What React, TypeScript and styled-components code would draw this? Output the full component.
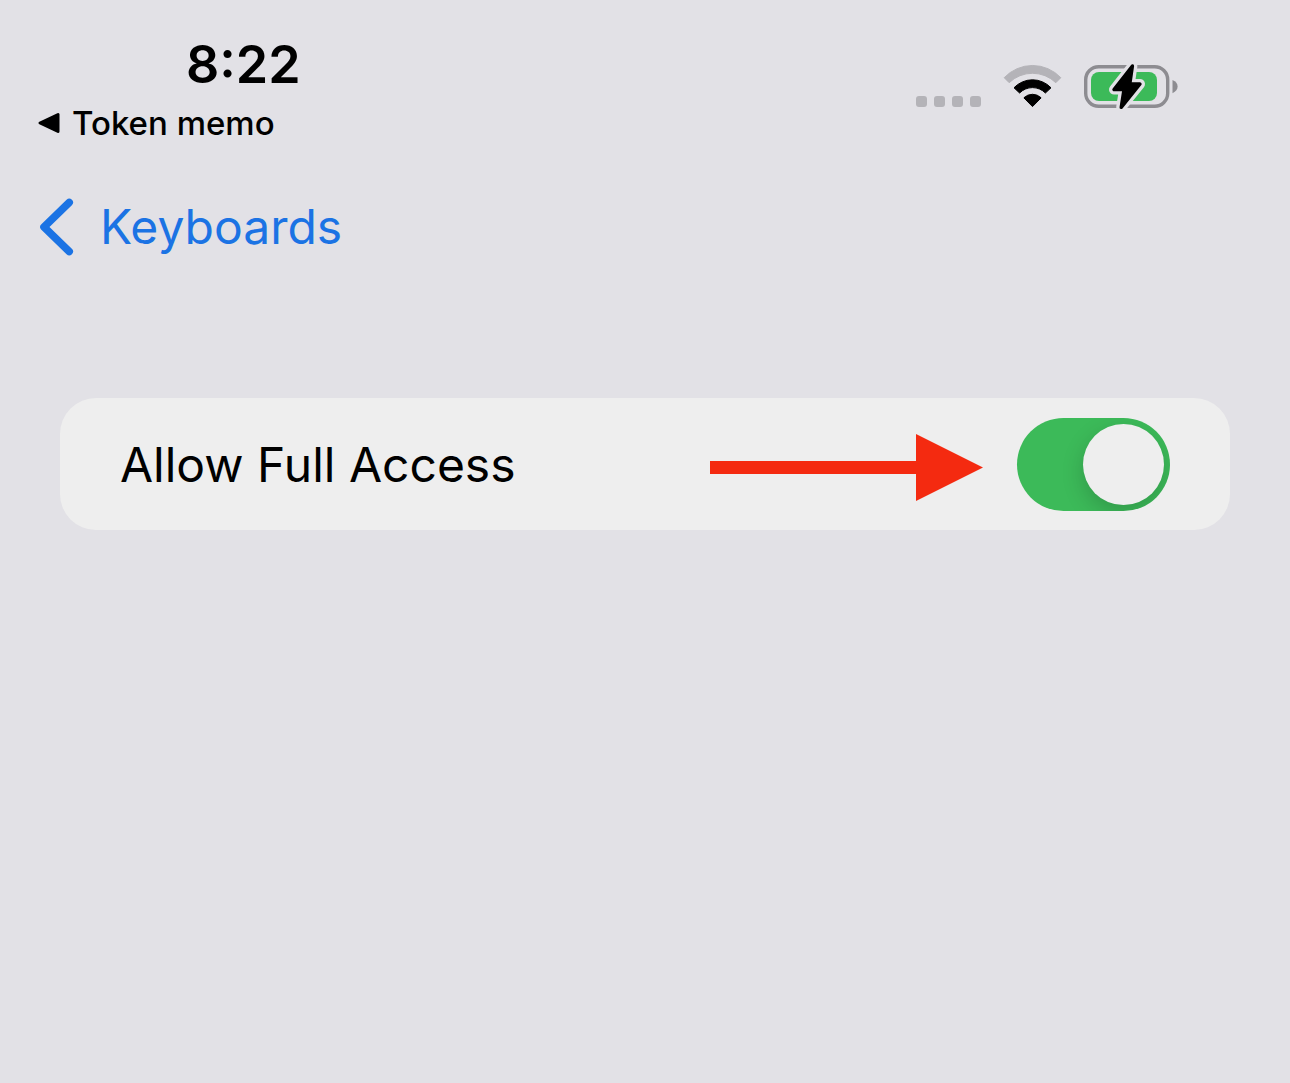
import React, { useState } from "react";
import styled, { createGlobalStyle } from "styled-components";

const color = {
  page: "#e2e1e6",
  card: "#eeeeee",
  ink: "#000000",
  muted: "#b4b3b8",
  outline: "#8d8c91",
  link: "#1b73e4",
  green: "#3cba59",
  red: "#f42a10",
};

const GlobalStyle = createGlobalStyle`
  *, *::before { box-sizing: border-box; }
  body {
    margin: 0;
    background: ${color.page};
    color: ${color.ink};
    font-family: Inter, "Liberation Sans", sans-serif;
  }
`;

const Screen = styled.div`
  min-height: 100vh;
  background: ${color.page};
`;

const StatusBar = styled.header`
  display: flex;
  justify-content: space-between;
  align-items: flex-start;
  padding: 32px 112px 0 38px;
`;

const StatusStart = styled.div`
  display: flex;
  flex-direction: column;
  align-items: flex-start;
  gap: 6px;
`;

const Clock = styled.time`
  padding-left: 148px;
  font-size: 52px;
  line-height: 66px;
  font-weight: 600;
`;

const ReturnLink = styled.a`
  display: flex;
  align-items: center;
  gap: 12px;
  color: ${color.ink};
  font-size: 33px;
  line-height: 38px;
  font-weight: 500;
  text-decoration: none;
`;

const StatusIcons = styled.div`
  display: flex;
  align-items: flex-end;
  gap: 23px;
  padding-top: 32px;
`;

const Signal = styled.div`
  display: flex;
  gap: 7px;
  padding-bottom: 3px;
`;

const SignalDot = styled.span`
  width: 11px;
  height: 11px;
  border-radius: 3px;
  background: ${color.muted};
`;

const Icon = styled.svg`
  display: block;
  flex: none;
  overflow: visible;
`;

const NavBar = styled.nav`
  display: flex;
  padding: 53px 40px 0;
`;

const BackLink = styled.a`
  display: flex;
  align-items: center;
  gap: 26px;
  color: ${color.link};
  font-size: 48px;
  line-height: 64px;
  text-decoration: none;
`;

const Content = styled.main`
  padding: 139px 60px 60px;
`;

const SettingRow = styled.div`
  display: flex;
  align-items: center;
  padding: 20px 60px 19px;
  border-radius: 36px;
  background: ${color.card};
`;

const SettingLabel = styled.label`
  flex: 1;
  font-size: 48px;
  line-height: 64px;
`;

const Pointer = styled(Icon)`
  margin: 6px 34px 0 0;
`;

const Toggle = styled.input`
  appearance: none;
  flex: none;
  display: flex;
  width: 153px;
  height: 93px;
  margin: 0;
  padding: 6px;
  border-radius: 47px;
  overflow: hidden;
  background: #c9c9cd;
  cursor: pointer;

  &::before {
    content: "";
    width: 81px;
    height: 81px;
    border-radius: 50%;
    background: ${color.card};
    box-shadow: 0 8px 22px rgba(0, 0, 0, 0.18);
  }

  &:checked {
    justify-content: flex-end;
    background: ${color.green};
  }
`;

const BOLT = "M48.4 2 L30 25.6 H40 L37.2 43.4 L56 20 H45.8 Z";

function WifiIcon() {
  return (
    <Icon width="57" height="46" viewBox="0 0 57 46" role="img" aria-label="Wi-Fi">
      <g strokeWidth="1" strokeLinejoin="round">
        <path
          d="M.2 13.7 A38.9 38.9 0 0 1 56.8 13.7 L51.8 18.7 A33.5 33.5 0 0 0 5.2 18.7 Z"
          fill={color.muted}
          stroke={color.muted}
        />
        <path
          d="M10 23.8 A25.4 25.4 0 0 1 47 23.8 L41.4 29 A18.1 18.1 0 0 0 15.6 29 Z"
          fill={color.ink}
          stroke={color.ink}
        />
        <path
          d="M19.9 33.9 A12 12 0 0 1 37.1 33.9 L28.5 42.6 Z"
          fill={color.ink}
          stroke={color.ink}
        />
      </g>
    </Icon>
  );
}

function BatteryIcon() {
  return (
    <Icon width="94" height="46" viewBox="0 0 94 46" role="img" aria-label="Battery charging">
      <rect x="1.7" y="2.7" width="82" height="39.6" rx="13" fill="none" stroke={color.outline} strokeWidth="3.4" />
      <rect x="7" y="8" width="66" height="29" rx="8" fill={color.green} />
      <path d="M88.5 16 C92 17.5 93.6 19.8 93.6 22.6 C93.6 25.4 92 27.7 88.5 29.2 Z" fill={color.outline} />
      <path d={BOLT} fill={color.page} stroke={color.page} strokeWidth="10" strokeLinejoin="round" />
      <path d={BOLT} fill={color.ink} stroke={color.ink} strokeWidth="3.4" strokeLinejoin="round" />
    </Icon>
  );
}

export default function App() {
  const [fullAccess, setFullAccess] = useState(true);

  return (
    <>
      <GlobalStyle />
      <Screen>
        <StatusBar>
          <StatusStart>
            <Clock>8:22</Clock>
            <ReturnLink href="#token-memo">
              <Icon width="22" height="22" viewBox="0 0 22 22" aria-hidden="true">
                <path
                  d="M2 11 L20 2.5 V19.5 Z"
                  fill={color.ink}
                  stroke={color.ink}
                  strokeWidth="3"
                  strokeLinejoin="round"
                />
              </Icon>
              Token memo
            </ReturnLink>
          </StatusStart>
          <StatusIcons>
            <Signal role="img" aria-label="No signal">
              <SignalDot />
              <SignalDot />
              <SignalDot />
              <SignalDot />
            </Signal>
            <WifiIcon />
            <BatteryIcon />
          </StatusIcons>
        </StatusBar>

        <NavBar>
          <BackLink href="#keyboards">
            <Icon width="34" height="58" viewBox="0 0 34 58" aria-hidden="true">
              <path
                d="M29.2 4.5 L4 29 L29.2 53.5"
                fill="none"
                stroke={color.link}
                strokeWidth="7.6"
                strokeLinecap="round"
                strokeLinejoin="round"
              />
            </Icon>
            Keyboards
          </BackLink>
        </NavBar>

        <Content>
          <SettingRow>
            <SettingLabel htmlFor="full-access">Allow Full Access</SettingLabel>
            <Pointer width="274" height="67" viewBox="0 0 274 67" aria-hidden="true">
              <path d="M1 27 H207 V0 L274 33.5 L207 67 V40 H1 Z" fill={color.red} />
            </Pointer>
            <Toggle
              id="full-access"
              type="checkbox"
              role="switch"
              checked={fullAccess}
              onChange={(event) => setFullAccess(event.target.checked)}
            />
          </SettingRow>
        </Content>
      </Screen>
    </>
  );
}
